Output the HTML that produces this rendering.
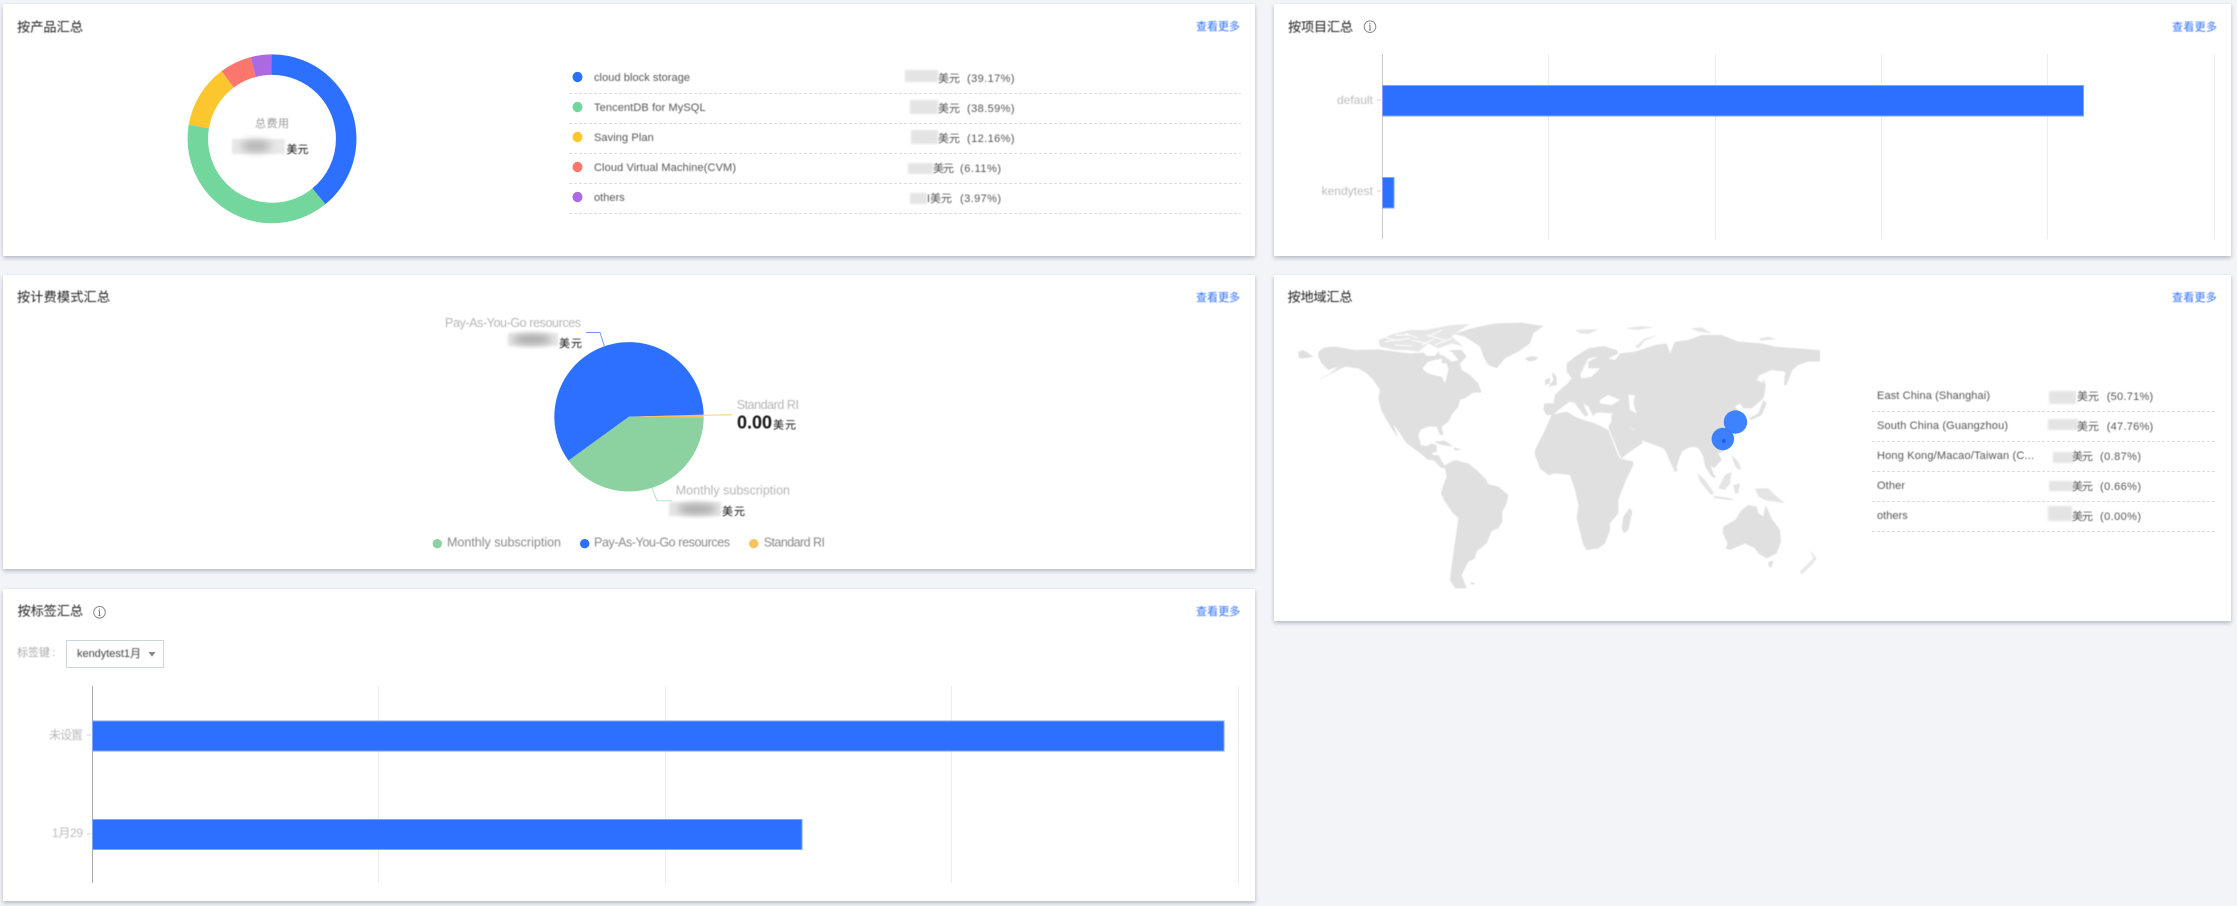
<!DOCTYPE html>
<html lang="zh-CN">
<head>
<meta charset="utf-8">
<title>费用汇总</title>
<style>
html,body{margin:0;padding:0;width:2237px;height:906px;overflow:hidden;background:#f2f4f8;}
body{position:relative;font-family:"Liberation Sans","Noto Sans CJK SC",sans-serif;}
.card{position:absolute;background:#fff;box-shadow:0 2px 4px rgba(54,58,80,.32);}
svg.main{position:absolute;left:0;top:0;width:2237px;height:906px;}
svg text{font-family:"Liberation Sans","Noto Sans CJK SC",sans-serif;dominant-baseline:central;}
.txt{filter:blur(.4px);}
.tt{font-size:13.2px;fill:#222;}
.lk{font-size:11px;fill:#2d70ff;}
.lg{font-size:11px;fill:#555;}
.am{font-size:11px;fill:#555;}
.bk{font-size:11px;fill:#111;}
.ax{font-size:12px;fill:#bbb;}
.pl{font-size:12.5px;fill:#b5b5b5;}
.pn{font-size:12.5px;fill:#888;}
</style>
</head>
<body>
<div class="card" style="left:3px;top:4px;width:1252px;height:252px"></div>
<div class="card" style="left:1274px;top:4px;width:957px;height:252px"></div>
<div class="card" style="left:3px;top:275px;width:1252px;height:294px"></div>
<div class="card" style="left:1274px;top:275px;width:957px;height:346px"></div>
<div class="card" style="left:3px;top:589px;width:1252px;height:312px"></div>

<svg class="main" viewBox="0 0 2237 906" xmlns="http://www.w3.org/2000/svg">
<defs>
<filter id="b" x="-50%" y="-50%" width="200%" height="200%"><feGaussianBlur stdDeviation="4"/></filter>
<filter id="s" x="-20%" y="-20%" width="140%" height="140%"><feGaussianBlur stdDeviation="1"/></filter>
<filter id="m" x="-5%" y="-5%" width="110%" height="110%"><feGaussianBlur stdDeviation=".55"/></filter>
</defs>

<!-- Donut -->
<g fill="none" stroke-width="20.5" transform="rotate(-90 272 138.8)">
<circle cx="272" cy="138.8" r="74.2" pathLength="100" stroke="#2d70ff" stroke-dasharray="39.17 60.83" stroke-dashoffset="0"/>
<circle cx="272" cy="138.8" r="74.2" pathLength="100" stroke="#73d79d" stroke-dasharray="38.59 61.41" stroke-dashoffset="-39.17"/>
<circle cx="272" cy="138.8" r="74.2" pathLength="100" stroke="#fcc62f" stroke-dasharray="12.16 87.84" stroke-dashoffset="-77.76"/>
<circle cx="272" cy="138.8" r="74.2" pathLength="100" stroke="#fb776d" stroke-dasharray="6.11 93.89" stroke-dashoffset="-89.92"/>
<circle cx="272" cy="138.8" r="74.2" pathLength="100" stroke="#ab6ae2" stroke-dasharray="3.97 96.03" stroke-dashoffset="-96.03"/>
</g>
<rect x="232" y="139" width="53" height="15" fill="#e8e8e8" filter="url(#s)"/>
<ellipse cx="256" cy="146" rx="15" ry="6" fill="#b5b5b5" filter="url(#b)"/>

<!-- product legend -->
<g>
<ellipse cx="577.5" cy="77" rx="5" ry="5.2" fill="#2d70ff"/>
<ellipse cx="577.5" cy="107" rx="5" ry="5.2" fill="#73d79d"/>
<ellipse cx="577.5" cy="137" rx="5" ry="5.2" fill="#fcc62f"/>
<ellipse cx="577.5" cy="167" rx="5" ry="5.2" fill="#fb776d"/>
<ellipse cx="577.5" cy="197" rx="5" ry="5.2" fill="#ab6ae2"/>
<g stroke="#dcdcdc" stroke-dasharray="3 2" stroke-width="1">
<path d="M569 93.5H1241M569 123.5H1241M569 153.5H1241M569 183.5H1241M569 213.5H1241"/>
</g>
<g fill="#e4e4e4" filter="url(#s)">
<rect x="905" y="70" width="33" height="12"/>
<rect x="910" y="100" width="28" height="14"/>
<rect x="911" y="130" width="27" height="14"/>
<rect x="908" y="163" width="25" height="11"/>
<rect x="910" y="193" width="17" height="11"/>
</g>
</g>

<!-- project chart -->
<g stroke="#ececec" stroke-width="1"><path d="M1548.5 54V239M1715.5 54V239M1881.5 54V239M2047.5 54V239M2214.5 54V239"/></g>
<path d="M1382.5 54V239" stroke="#c8c8c8"/>
<path d="M1377 100H1381M1377 191H1381" stroke="#d5d5d5"/>
<rect x="1382.5" y="85.5" width="701" height="30.5" fill="#2d70ff" stroke="#7ea6ff"/>
<rect x="1382.5" y="177.5" width="11.5" height="30.5" fill="#2d70ff" stroke="#7ea6ff"/>
<g fill="none" stroke="#888" stroke-width="1">
<circle cx="1370" cy="26.7" r="5.8"/>
<circle cx="99.5" cy="612.3" r="5.8"/>
</g>
<path d="M1370 25v5M1369 25h1M1369 30h2M1370 23v1M99.5 610.6v5M98.5 610.6h1M98.5 615.6h2M99.5 608.6v1" stroke="#777" fill="none"/>

<!-- Pie -->
<path d="M629 416.7L703.7 415A74.7 74.7 0 1 0 568.5 460.6Z" fill="#2d70ff"/>
<path d="M629 416.7L703.7 417.3A74.7 74.7 0 0 1 568.5 460.6Z" fill="#8cd2a0"/>
<path d="M629 416.7L703.7 414.6V417.4Z" fill="#f6c35f"/>
<path d="M703 415.3L732 414.7" stroke="#f8dc9c" stroke-width="1.3" fill="none"/>
<path d="M586 332.5H600L604.3 346" stroke="#6f9cff" fill="none"/>
<path d="M652 488L657 500.7H672" stroke="#b5e3c2" fill="none"/>
<rect x="508" y="333" width="50" height="13" fill="#e6e6e6" filter="url(#s)"/>
<ellipse cx="532" cy="339.5" rx="20" ry="5" fill="#a8a8a8" filter="url(#b)"/>
<rect x="669" y="502" width="52" height="14" fill="#e6e6e6" filter="url(#s)"/>
<ellipse cx="697" cy="509" rx="20" ry="5" fill="#a8a8a8" filter="url(#b)"/>
<circle cx="437.3" cy="543.7" r="4.7" fill="#8cd2a0"/>
<circle cx="584.7" cy="543.7" r="4.7" fill="#2d70ff"/>
<circle cx="753.7" cy="543.7" r="4.7" fill="#f6c35f"/>

<!-- World map -->
<g fill="#e0e0e0" filter="url(#m)">
<g transform="translate(1295,320) scale(.33333)">
<path d="M70 95L90 82L120 80L180 90L250 88L300 95L345 100L385 98L395 108L420 108L430 95L440 100L470 90L500 90L515 110L495 130L500 150L525 165L550 190L555 205L560 218L535 218L510 235L495 240L490 260L470 285L460 305L440 320L445 345L435 345L425 320L400 320L378 328L370 345L378 375L395 378L410 370L425 375L425 395L410 400L430 420L400 420L370 395L335 370L315 340L295 312L310 355L290 325L275 300L258 270L250 235L255 210L235 180L215 160L190 145L150 140L130 150L90 170L60 185L105 160L130 140L100 150L80 130L70 110Z"/>
<path fill="#e6e6e6" d="M250 60L300 40L345 30L390 30L470 15L525 12L480 40L470 50L505 80L470 70L430 85L400 70L370 95L340 90L300 90L255 80Z"/>
<path d="M475 42L530 25L600 10L680 8L745 18L715 40L705 70L670 95L630 115L605 145L580 135L565 110L555 80L510 50Z"/>
<path d="M690 115L710 108L730 112L720 122L700 124Z"/>
<path d="M770 155L785 170L785 195L760 200L775 180Z"/>
<path d="M750 180L765 172L765 190L750 195Z"/>
<path d="M10 95L25 90L55 110L30 115L12 115Z"/>
<path d="M415 365L450 362L475 380L440 375Z"/>
<path d="M475 382L500 388L480 392Z"/>
<path d="M382 145L400 125L420 120L440 115L440 130L455 130L460 150L450 190L440 170L415 165L395 158Z" fill="#fff"/>
<path d="M270 65L345 55M350 60L395 70M395 45L450 60M300 45L340 45M330 40L370 55M380 75L420 55M440 30L400 50M300 75L350 78M420 75L470 55M260 50L300 60" stroke="#fff" stroke-width="3" fill="none"/>
<path d="M430 100L445 90L470 95L490 120L470 125L450 110Z" fill="#fff"/>
</g>
<g transform="translate(1295,455) scale(.33333)">
<path d="M440 35L460 25L480 15L520 25L545 45L575 75L580 88L610 95L640 120L635 145L622 170L622 200L610 220L590 228L575 265L545 290L540 310L520 320L500 360L515 400L480 400L465 375L470 330L480 260L490 190L470 170L450 140L438 115L445 90L455 65L450 40Z"/>
<path d="M390 0L415 15L440 40L450 35L430 0Z"/>
<ellipse cx="533" cy="385" rx="7" ry="3"/>
</g>
<g transform="translate(1555,320) scale(.33333)">
<!-- Eurasia -->
<path d="M-32 250L-5 250L0 225L20 205L38 190L50 175L35 155L35 130L60 110L100 85L145 78L185 90L190 100L160 115L180 120L195 100L240 95L270 85L300 75L335 70L345 100L360 65L400 60L440 45L500 45L550 65L620 70L660 80L730 85L795 90L795 125L760 125L730 135L712 150L695 195L687 195L690 155L650 150L615 165L605 180L630 190L625 235L590 265L565 265L555 250L540 260L560 285L575 305L565 325L540 340L535 370L520 385L505 395L490 400L500 420L490 430L478 445L467 435L475 460L485 475L470 470L450 440L445 410L437 395L430 385L415 380L395 385L380 395L365 440L360 455L345 425L333 395L325 385L300 375L270 365L260 360L232 325L225 320L250 345L262 352L262 370L225 395L200 415L192 400L165 335L160 320L170 305L168 288L175 280L130 278L120 280L115 290L100 260L85 250L100 285L90 290L60 250L45 245L30 255L10 270L-5 285L-25 285L-35 270Z"/>
<!-- Africa -->
<path d="M-10 285L-35 340L-60 390L-60 405L-45 445L-20 465L0 460L45 465L60 510L70 555L65 595L85 675L95 690L130 685L150 670L165 630L165 610L190 580L190 540L215 475L235 435L235 425L195 415L185 395L160 330L120 310L85 300L60 290L35 275Z"/>
<!-- Seas -->
<path d="M135 240L160 225L195 240L170 255L135 250Z" fill="#fff"/>
<path d="M220 225L240 225L235 250L245 280L225 270Z" fill="#fff"/>
<path d="M75 165L100 115L130 110L100 125L100 145L135 145L110 170L80 175Z" fill="#fff"/>
<!-- Arctic islands -->
<g fill="#e6e6e6">
<path d="M60 30L100 28L130 28L100 42L75 40Z"/>
<path d="M210 25L260 18L295 22L250 30Z"/>
<path d="M240 80L270 55L310 45L270 62L250 85Z"/>
<path d="M405 25L440 22L470 40L430 35Z"/>
<path d="M610 55L640 50L665 58L620 62Z"/>
</g>
<!-- Japan / Sakhalin -->
<path d="M580 295L610 280L625 240L635 250L620 285L590 300Z"/>
<path d="M625 175L632 195L628 232L622 210Z"/>
<!-- SE Asia -->
<g fill="#e4e4e4">
<path d="M530 405L550 425L560 450L545 445L535 425Z"/>
<path d="M490 505L510 465L530 455L525 490L510 510Z"/>
<path d="M427 460L450 480L478 520L468 525L435 485Z"/>
<path d="M475 527L515 533L545 540L520 540L480 535Z"/>
<path d="M535 495L555 490L550 520L540 520Z"/>
<path d="M600 505L640 505L665 530L690 550L660 545L630 540L610 530Z"/>
</g>
<!-- Australia -->
<path d="M505 620L540 600L560 570L580 555L605 560L610 580L625 590L632 555L650 595L675 630L678 665L665 700L635 715L610 700L600 685L570 670L525 690L512 685L518 670L503 640Z"/>
<path d="M640 725L655 723L650 743L642 740Z"/>
<path fill="#e6e6e6" d="M765 690L785 715L770 735L740 763L735 755L760 730L775 715Z"/>
<!-- Madagascar / Sri Lanka -->
<path d="M225 563L232 575L220 630L207 640L200 625L205 590Z"/>
<path d="M360 435L368 450L360 457L355 445Z"/>
</g>
</g>
<circle cx="1735.5" cy="422" r="11.7" fill="#3179ff" fill-opacity=".92"/>
<circle cx="1722.8" cy="439" r="11.2" fill="#3179ff" fill-opacity=".94"/>
<circle cx="1723.8" cy="441" r="2" fill="#1f5fe6"/>

<!-- region table -->
<g stroke="#dcdcdc" stroke-dasharray="3 2" stroke-width="1">
<path d="M1872 411.5H2217M1872 441.5H2217M1872 471.5H2217M1872 501.5H2217M1872 531.5H2217"/>
</g>
<g fill="#e4e4e4" filter="url(#s)">
<rect x="2049" y="391" width="27" height="13"/>
<rect x="2048" y="419" width="30" height="11"/>
<rect x="2053" y="452" width="20" height="11"/>
<rect x="2049" y="481" width="24" height="10"/>
<rect x="2048" y="506" width="24" height="15"/>
</g>

<!-- tag chart -->
<g stroke="#ececec" stroke-width="1"><path d="M378.5 686V883M665.5 686V883M951.5 686V883M1238.5 686V883"/></g>
<path d="M92.5 686V883" stroke="#aaa"/>
<path d="M87 735H91M87 834H91" stroke="#d5d5d5"/>
<rect x="92.5" y="721" width="1131.5" height="30" fill="#2d70ff" stroke="#7ea6ff"/>
<rect x="92.5" y="819.5" width="709.5" height="30" fill="#2d70ff" stroke="#7ea6ff"/>
<rect x="66.5" y="640.5" width="97" height="27" fill="#fff" stroke="#cfd5de"/>
<path d="M148.500 652H155.500L152 656.800Z" fill="#888"/>

<!-- Text -->
<g class="txt">
<text x="17" y="27" class="tt" textLength="66">按产品汇总</text>
<text x="1196" y="27" class="lk" textLength="44">查看更多</text>
<text x="255" y="124" font-size="11" fill="#999" textLength="34">总费用</text>
<text x="286.500" y="150" class="bk" textLength="22">美元</text>

<text x="594" y="78" class="lg" textLength="96">cloud block storage</text>
<text x="594" y="108" class="lg" textLength="111.600">TencentDB for MySQL</text>
<text x="594" y="138" class="lg" textLength="59.700">Saving Plan</text>
<text x="594" y="168" class="lg" textLength="142">Cloud Virtual Machine(CVM)</text>
<text x="594" y="198" class="lg" textLength="30.800">others</text>

<text x="938" y="79" class="am" textLength="22">美元</text><text x="967" y="79" class="am" textLength="47.500">(39.17%)</text>
<text x="938" y="109" class="am" textLength="22">美元</text><text x="967" y="109" class="am" textLength="47.500">(38.59%)</text>
<text x="938" y="139" class="am" textLength="22">美元</text><text x="967" y="139" class="am" textLength="47.500">(12.16%)</text>
<text x="933" y="169" class="am" textLength="21">美元</text><text x="960" y="169" class="am" textLength="41">(6.11%)</text>
<text x="927" y="199" class="am">I</text><text x="930" y="199" class="am" textLength="22">美元</text><text x="960" y="199" class="am" textLength="41">(3.97%)</text>

<text x="1288" y="27" class="tt" textLength="65">按项目汇总</text>
<text x="2172" y="27.500" class="lk" textLength="45">查看更多</text>
<text x="1373" y="100" class="ax" text-anchor="end">default</text>
<text x="1373" y="191" class="ax" text-anchor="end">kendytest</text>

<text x="17" y="297" class="tt" textLength="93">按计费模式汇总</text>
<text x="1196" y="298" class="lk" textLength="44">查看更多</text>
<text x="445" y="323" class="pl" textLength="136">Pay-As-You-Go resources</text>
<text x="559" y="344" class="bk" textLength="23">美元</text>
<text x="736.700" y="405" class="pl" textLength="62.300">Standard RI</text>
<text x="737" y="422.700" font-size="18" font-weight="700" fill="#111" textLength="35">0.00</text>
<text x="773" y="425.700" class="bk" textLength="23">美元</text>
<text x="675.700" y="490.700" class="pl" textLength="114.300">Monthly subscription</text>
<text x="722" y="512" class="bk" textLength="23">美元</text>
<text x="447" y="542.700" class="pn" textLength="114">Monthly subscription</text>
<text x="594" y="542.700" class="pn" textLength="136">Pay-As-You-Go resources</text>
<text x="763.700" y="542.700" class="pn" textLength="61.300">Standard RI</text>

<text x="1287.500" y="297" class="tt" textLength="65">按地域汇总</text>
<text x="2172" y="298" class="lk" textLength="44.700">查看更多</text>
<text x="1877" y="396" class="lg" textLength="113">East China (Shanghai)</text>
<text x="1877" y="426" class="lg" textLength="131">South China (Guangzhou)</text>
<text x="1877" y="456" class="lg" textLength="157">Hong Kong/Macao/Taiwan (C...</text>
<text x="1877" y="486" class="lg" textLength="28">Other</text>
<text x="1877" y="516" class="lg" textLength="30.700">others</text>

<text x="2077" y="397" class="am" textLength="22">美元</text><text x="2106.700" y="397" class="am" textLength="46.500">(50.71%)</text>
<text x="2077" y="427" class="am" textLength="22">美元</text><text x="2106.700" y="427" class="am" textLength="46.500">(47.76%)</text>
<text x="2072" y="457" class="am" textLength="21">美元</text><text x="2100" y="457" class="am" textLength="41">(0.87%)</text>
<text x="2072" y="487" class="am" textLength="21">美元</text><text x="2100" y="487" class="am" textLength="41">(0.66%)</text>
<text x="2072" y="517" class="am" textLength="21">美元</text><text x="2100" y="517" class="am" textLength="41">(0.00%)</text>

<text x="17.500" y="611" class="tt" textLength="65.500">按标签汇总</text>
<text x="1196" y="612" class="lk" textLength="44.300">查看更多</text>
<text x="17" y="653" font-size="11" fill="#aaa" textLength="33">标签键</text>
<text x="52" y="653" font-size="11" fill="#aaa">:</text>
<text x="77" y="654" font-size="11" fill="#444" textLength="64">kendytest1月</text>
<text x="83" y="735" class="ax" text-anchor="end" font-size="11" textLength="34">未设置</text>
<text x="83" y="833" class="ax" text-anchor="end" textLength="31">1月29</text>
</g>
</svg>
</body>
</html>
